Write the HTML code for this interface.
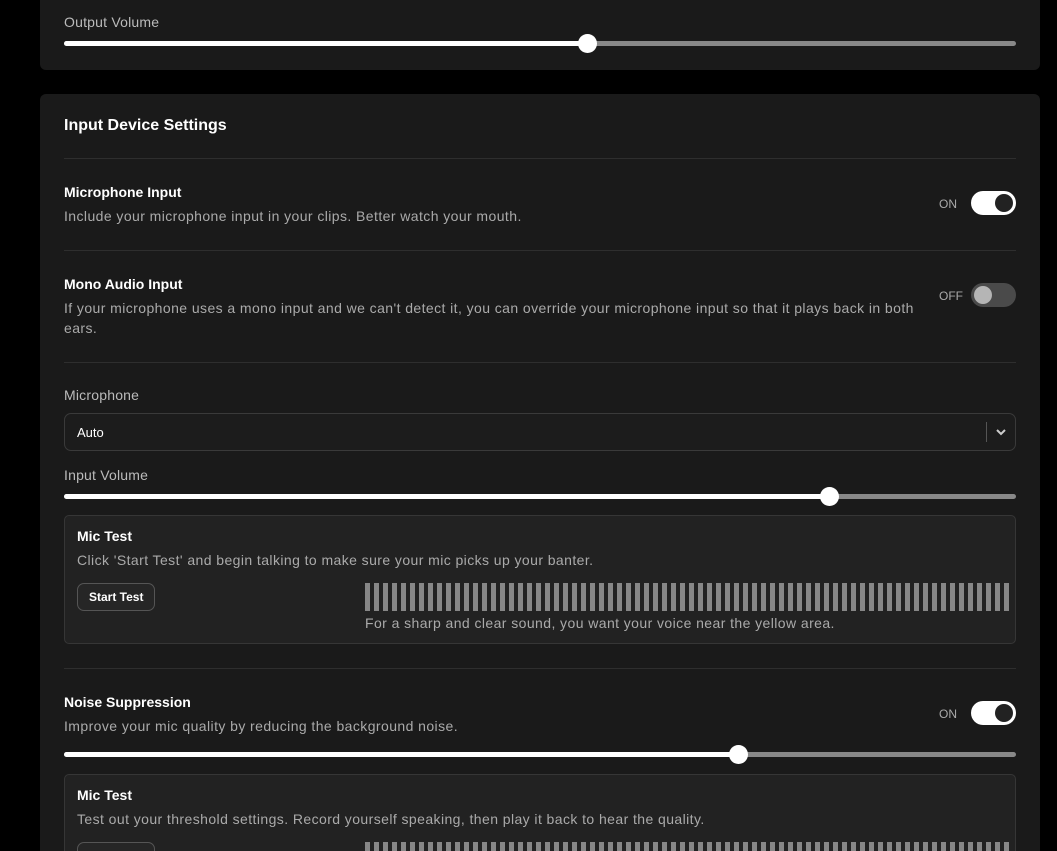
<!DOCTYPE html>
<html style="overflow:hidden;height:851px"><head><style>
*{box-sizing:border-box;margin:0;padding:0}
body{width:1057px;height:851px;background:#000;font-family:"Liberation Sans",sans-serif;color:#fff;position:relative;overflow:hidden}
.card{position:absolute;left:40px;width:1000px;background:#1a1a1a;border-radius:6px}
.a{position:absolute}
.lbl{font-size:14px;color:#bbb;letter-spacing:0.2px}
.t{font-size:14px;font-weight:bold;color:#fff}
.d{font-size:14px;color:#aaa;line-height:20px;letter-spacing:0.42px}
.hr{position:absolute;left:64px;width:952px;height:1px;background:#2e2e2e}
.track{position:absolute;left:64px;width:952px;height:5px;border-radius:3px;background:#888}
.track i{position:absolute;left:0;top:0;height:5px;border-radius:3px;background:#fff}
.track b{position:absolute;top:-7px;width:19px;height:19px;border-radius:50%;background:#fff;margin-left:-9px}
.tog{position:absolute;left:971px;width:45px;height:24px;border-radius:12px}
.tog.on{background:#fff}.tog.on::after{content:"";position:absolute;right:3px;top:3px;width:18px;height:18px;border-radius:50%;background:#222}
.tog.off{background:#4a4a4a}.tog.off::after{content:"";position:absolute;left:3px;top:3px;width:18px;height:18px;border-radius:50%;background:#b5b5b5}
.st{position:absolute;left:939px;font-size:12px;color:#aaa}
.box{position:absolute;left:64px;width:952px;background:#222;border:1px solid #363636;border-radius:5px}
.btn{position:absolute;left:12px;border:1px solid #555;border-radius:7px;font-size:12px;font-weight:bold;padding:6px 11px;background:#262626}
.bars{position:absolute;left:300px;width:646px;height:28px;background:repeating-linear-gradient(90deg,#878787 0 5px,transparent 5px 9px)}
</style></head><body>
<div class="card" style="top:-10px;height:80px"></div>
<div class="a lbl" style="left:64px;top:14px">Output Volume</div>
<div class="track" style="top:41px"><i style="width:523px"></i><b style="left:523px"></b></div>

<div class="card" style="top:94px;height:757px;border-radius:6px 6px 0 0"></div>
<div class="a" style="left:64px;top:117px;font-size:16px;font-weight:bold">Input Device Settings</div>
<div class="hr" style="top:158px"></div>
<div class="a t" style="left:64px;top:184px">Microphone Input</div>
<div class="a d" style="left:64px;top:206px">Include your microphone input in your clips. Better watch your mouth.</div>
<div class="st" style="top:197px">ON</div><div class="tog on" style="top:191px"></div>
<div class="hr" style="top:250px"></div>
<div class="a t" style="left:64px;top:276px">Mono Audio Input</div>
<div class="a d" style="left:64px;top:298px;width:865px">If your microphone uses a mono input and we can't detect it, you can override your microphone input so that it plays back in both ears.</div>
<div class="st" style="top:289px">OFF</div><div class="tog off" style="top:283px"></div>
<div class="hr" style="top:362px"></div>
<div class="a lbl" style="left:64px;top:387px">Microphone</div>
<div class="a" style="left:64px;top:413px;width:952px;height:38px;border:1px solid #3a3a3a;border-radius:7px;background:#1c1c1c">
<div class="a" style="left:12px;top:11px;font-size:13px">Auto</div>
<div class="a" style="left:921px;top:8px;width:1px;height:20px;background:#555"></div>
<svg class="a" style="left:930px;top:13px" width="12" height="10" viewBox="0 0 12 10"><path d="M2 3l4 4 4-4" stroke="#ccc" stroke-width="2" fill="none"/></svg>
</div>
<div class="a lbl" style="left:64px;top:467px">Input Volume</div>
<div class="track" style="top:494px"><i style="width:765px"></i><b style="left:765px"></b></div>
<div class="box" style="top:515px;height:129px">
<div class="a t" style="left:12px;top:12px">Mic Test</div>
<div class="a d" style="left:12px;top:34px">Click 'Start Test' and begin talking to make sure your mic picks up your banter.</div>
<div class="btn" style="top:67px">Start Test</div>
<div class="bars" style="top:67px"></div>
<div class="a d" style="left:300px;top:97px">For a sharp and clear sound, you want your voice near the yellow area.</div>
</div>
<div class="hr" style="top:668px"></div>
<div class="a t" style="left:64px;top:694px">Noise Suppression</div>
<div class="a d" style="left:64px;top:716px">Improve your mic quality by reducing the background noise.</div>
<div class="st" style="top:707px">ON</div><div class="tog on" style="top:701px"></div>
<div class="track" style="top:752px"><i style="width:674px"></i><b style="left:674px"></b></div>
<div class="box" style="top:774px;height:90px">
<div class="a t" style="left:12px;top:12px">Mic Test</div>
<div class="a d" style="left:12px;top:34px">Test out your threshold settings. Record yourself speaking, then play it back to hear the quality.</div>
<div class="btn" style="top:67px">Start Test</div>
<div class="bars" style="top:67px"></div>
</div>
</body></html>
